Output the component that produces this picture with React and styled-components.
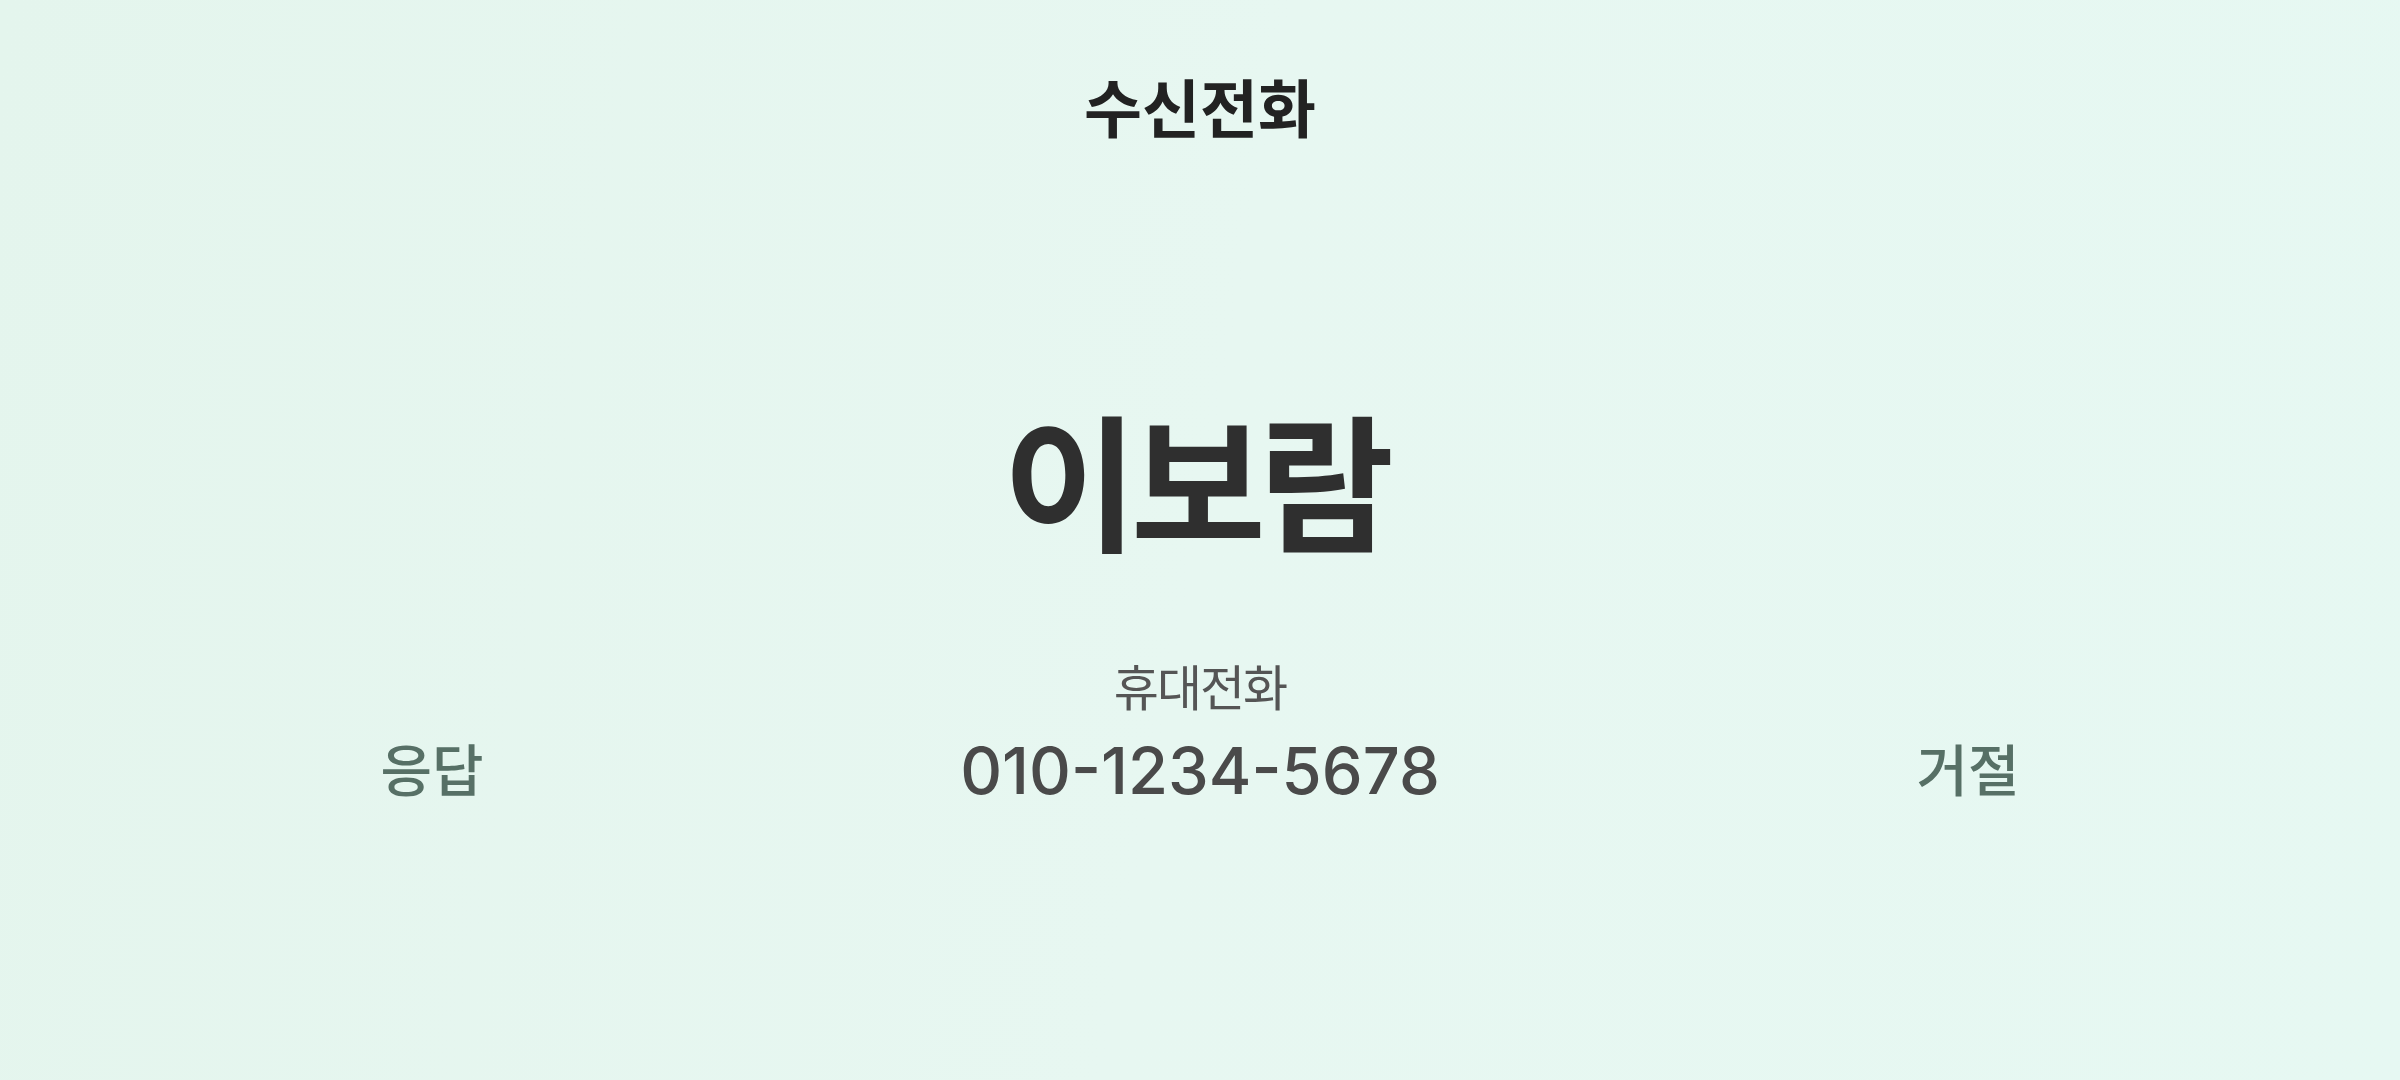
import React from "react"
import styled, { createGlobalStyle } from "styled-components"

const GlobalStyle = createGlobalStyle`
  html, body {
    margin: 0;
    padding: 0;
    background: #e6f7f0;
  }
  body {
    font-family: Inter, "Noto Sans CJK KR", sans-serif;
  }
`

const Screen = styled.div`
  height: 100vh;
  display: flex;
  flex-direction: column;
  align-items: stretch;
  background: linear-gradient(100deg, #e4f5ed 0%, #e7f7f1 50%, #e6f8f2 100%);
  box-sizing: border-box;
`

const Title = styled.h1`
  margin: 78px 0 0;
  text-align: center;
  font-size: 63px;
  line-height: 1;
  font-weight: 700;
  color: #222;
`

const CallRow = styled.div`
  display: grid;
  grid-template-columns: 1fr 1fr 1fr;
  align-items: end;
  padding: 0 48px;
  margin-top: 272px;
`

const Caller = styled.div`
  display: flex;
  flex-direction: column;
  align-items: center;
`

const Name = styled.div`
  font-size: 147px;
  line-height: 1;
  font-weight: 700;
  color: #2f2f2f;
  letter-spacing: -7px;
  padding-right: 10px;
`

const Kind = styled.div`
  margin-top: 104px;
  font-size: 49px;
  line-height: 1;
  font-weight: 400;
  color: #555;
  letter-spacing: -2px;
`

const Number = styled.div`
  margin-top: 25px;
  font-size: 65px;
  line-height: 1;
  font-weight: 500;
  color: #4a4a4a;
`

const Action = styled.button`
  justify-self: center;
  border: 0;
  background: none;
  padding: 0;
  font-family: inherit;
  font-size: 56px;
  line-height: 1;
  font-weight: 500;
  color: ${(p) => p.tone};
  cursor: pointer;
  margin-bottom: 4px;
`

export default function App() {
  return (
    <>
      <GlobalStyle />
      <Screen>
        <Title>수신전화</Title>
        <CallRow>
          <Action tone="#577066">응답</Action>
          <Caller>
            <Name>이보람</Name>
            <Kind>휴대전화</Kind>
            <Number>010-1234-5678</Number>
          </Caller>
          <Action tone="#577066">거절</Action>
        </CallRow>
      </Screen>
    </>
  )
}
